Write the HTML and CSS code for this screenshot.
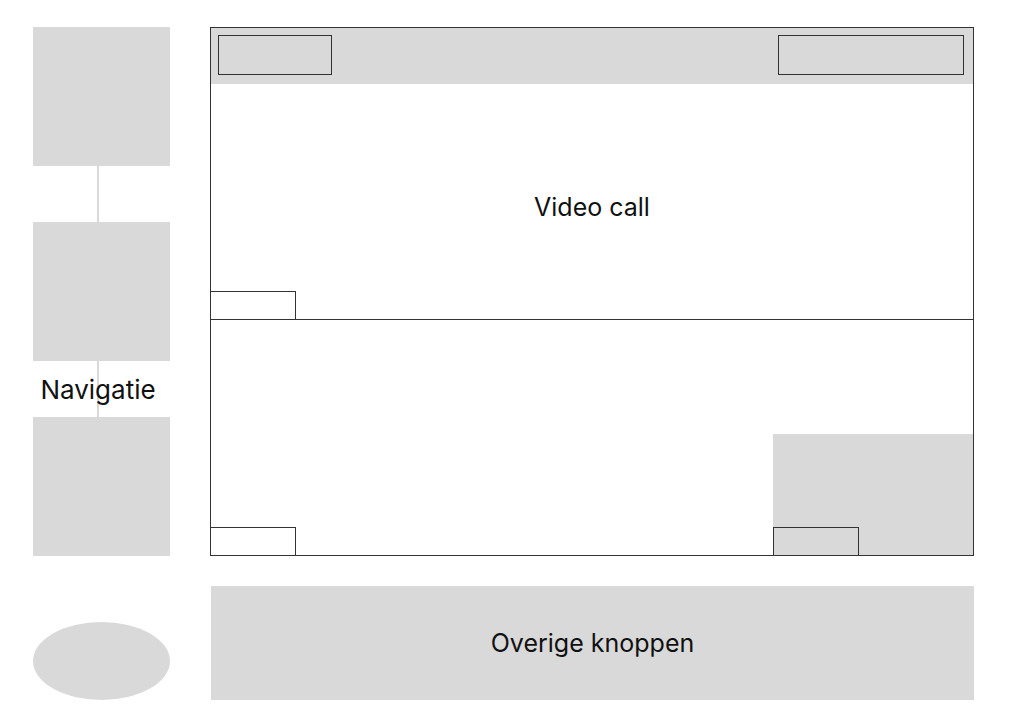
FILE: index.html
```html
<!DOCTYPE html>
<html lang="nl">
<head>
    <meta charset="UTF-8">
    <meta name="viewport" content="width=device-width, initial-scale=1.0">
    <title>Video call wireframe</title>
    <link rel="stylesheet" href="styles.css">
</head>
<body>

<div class="page">

  <div class="nav">
    <div class="nav-box"></div>
    <div class="nav-gap"></div>
    <div class="nav-box"></div>
    <div class="nav-gap"><span class="nav-label">Navigatie</span></div>
    <div class="nav-box"></div>
  </div>

  <div class="call">
    <div class="tile tile-top">
      <div class="call-bar">
        <div class="bar-box bar-left"></div>
        <div class="bar-box bar-right"></div>
      </div>
      <div class="call-title">Video call</div>
      <div class="name-tag"></div>
    </div>
    <div class="tile tile-bottom">
      <div class="name-tag"></div>
      <div class="self-view">
        <div class="name-tag"></div>
      </div>
    </div>
  </div>

  <div class="avatar"></div>

  <div class="buttons">Overige knoppen</div>

</div>

</body>
</html>
```

FILE: styles.css
```css
body {
    margin: 0;
    background: #fff;
    font-family: Inter, "Liberation Sans", sans-serif;
    color: #111;
}

.page {
    display: grid;
    grid-template-columns: 137px 764px;
    grid-template-rows: 529px 114px;
    column-gap: 40px;
    row-gap: 30px;
    padding: 27px 0 0 33px;
    align-items: end;
}

/* left navigation column */
.nav {
    display: flex;
    flex-direction: column;
    height: 529px;
}
.nav-box {
    height: 139px;
    background: #d9d9d9;
}
.nav-gap {
    height: 56px;
    margin-right: 7px;
    background: linear-gradient(#d9d9d9, #d9d9d9) center / 2px 100% no-repeat;
    display: flex;
    align-items: center;
    justify-content: center;
}
.nav-label {
    font-size: 26px;
    white-space: nowrap;
}

/* video call frame */
.call {
    height: 529px;
    box-sizing: border-box;
    border: 1px solid #333;
    display: flex;
    flex-direction: column;
}
.tile {
    position: relative;
}
.tile-top {
    height: 292px;
    box-sizing: border-box;
    border-bottom: 1px solid #333;
    display: flex;
    flex-direction: column;
}
.tile-bottom {
    flex: 1;
}

.call-bar {
    height: 56px;
    background: #d9d9d9;
    display: flex;
    justify-content: space-between;
    align-items: flex-start;
    padding: 7px 9px 0 7px;
    box-sizing: border-box;
}
.bar-box {
    height: 40px;
    box-sizing: border-box;
    border: 1px solid #333;
}
.bar-left {
    width: 114px;
}
.bar-right {
    width: 186px;
}

.call-title {
    flex: 1;
    display: flex;
    justify-content: center;
    padding-top: 108px;
    font-size: 25px;
}

.name-tag {
    position: absolute;
    left: -1px;
    bottom: -1px;
    width: 86px;
    height: 29px;
    box-sizing: border-box;
    border: 1px solid #333;
    background: #fff;
}

.self-view {
    position: absolute;
    right: 0;
    bottom: 0;
    width: 200px;
    height: 121px;
    background: #d9d9d9;
}
.self-view .name-tag {
    left: 0;
    background: #d9d9d9;
}

/* bottom row */
.avatar {
    width: 137px;
    height: 78px;
    border-radius: 50%;
    background: #d9d9d9;
}

.buttons {
    height: 114px;
    margin-left: 1px;
    background: #d9d9d9;
    display: flex;
    align-items: center;
    justify-content: center;
    font-size: 25px;
}
```
